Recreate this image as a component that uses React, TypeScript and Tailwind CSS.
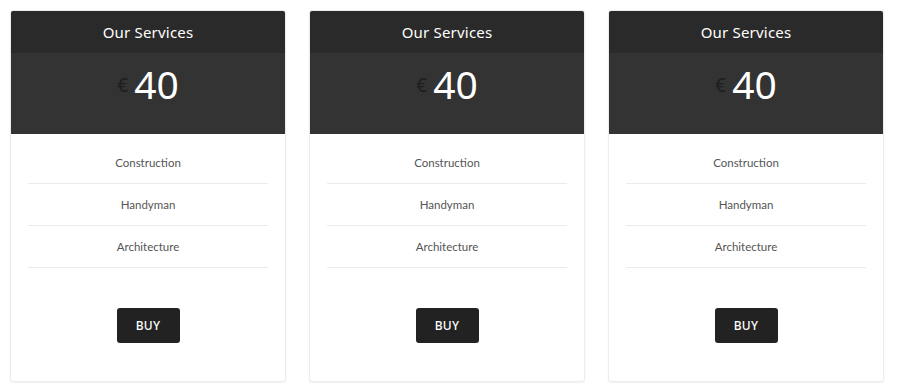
const items = ['Construction', 'Handyman', 'Architecture']

const PriceCard = () => {
  return (
    <div className="w-[276px] h-[372px] flex flex-col bg-white border border-[#ececec] rounded-[3px] shadow-[0_1px_2px_rgba(0,0,0,0.06)] overflow-hidden">
      <div className="h-[42px] flex items-center justify-center bg-[#2a2a2a] text-white text-[15px] font-['Noto_Sans',sans-serif] tracking-[0.2px]">
        Our Services
      </div>
      <div className="h-[81px] flex items-center justify-center pb-[20px] bg-[#333333] font-['Noto_Sans',sans-serif]">
        <span className="text-[#1e1e1e] text-[19px] mr-[6px] mt-[4px]">€</span>
        <span className="text-white text-[39px] font-normal leading-none">40</span>
      </div>
      <ul className="px-[17px] pt-[8px] font-['Lato',sans-serif] text-[11.5px] text-[#555]">
        {items.map((item) => (
          <li key={item} className="h-[42px] flex items-center justify-center border-b border-[#ebebeb]">
            {item}
          </li>
        ))}
      </ul>
      <div className="flex justify-center pt-[40px]">
        <button className="w-[63px] h-[35px] bg-[#222222] text-white text-[12px] font-medium rounded-[3px] font-['Noto_Sans',sans-serif] tracking-[0.3px]">
          BUY
        </button>
      </div>
    </div>
  )
}

export default function App() {
  return (
    <div className="w-[900px] h-[392px] bg-white flex gap-[23px] pl-[10px] pt-[10px]">
      <PriceCard />
      <PriceCard />
      <PriceCard />
    </div>
  )
}
